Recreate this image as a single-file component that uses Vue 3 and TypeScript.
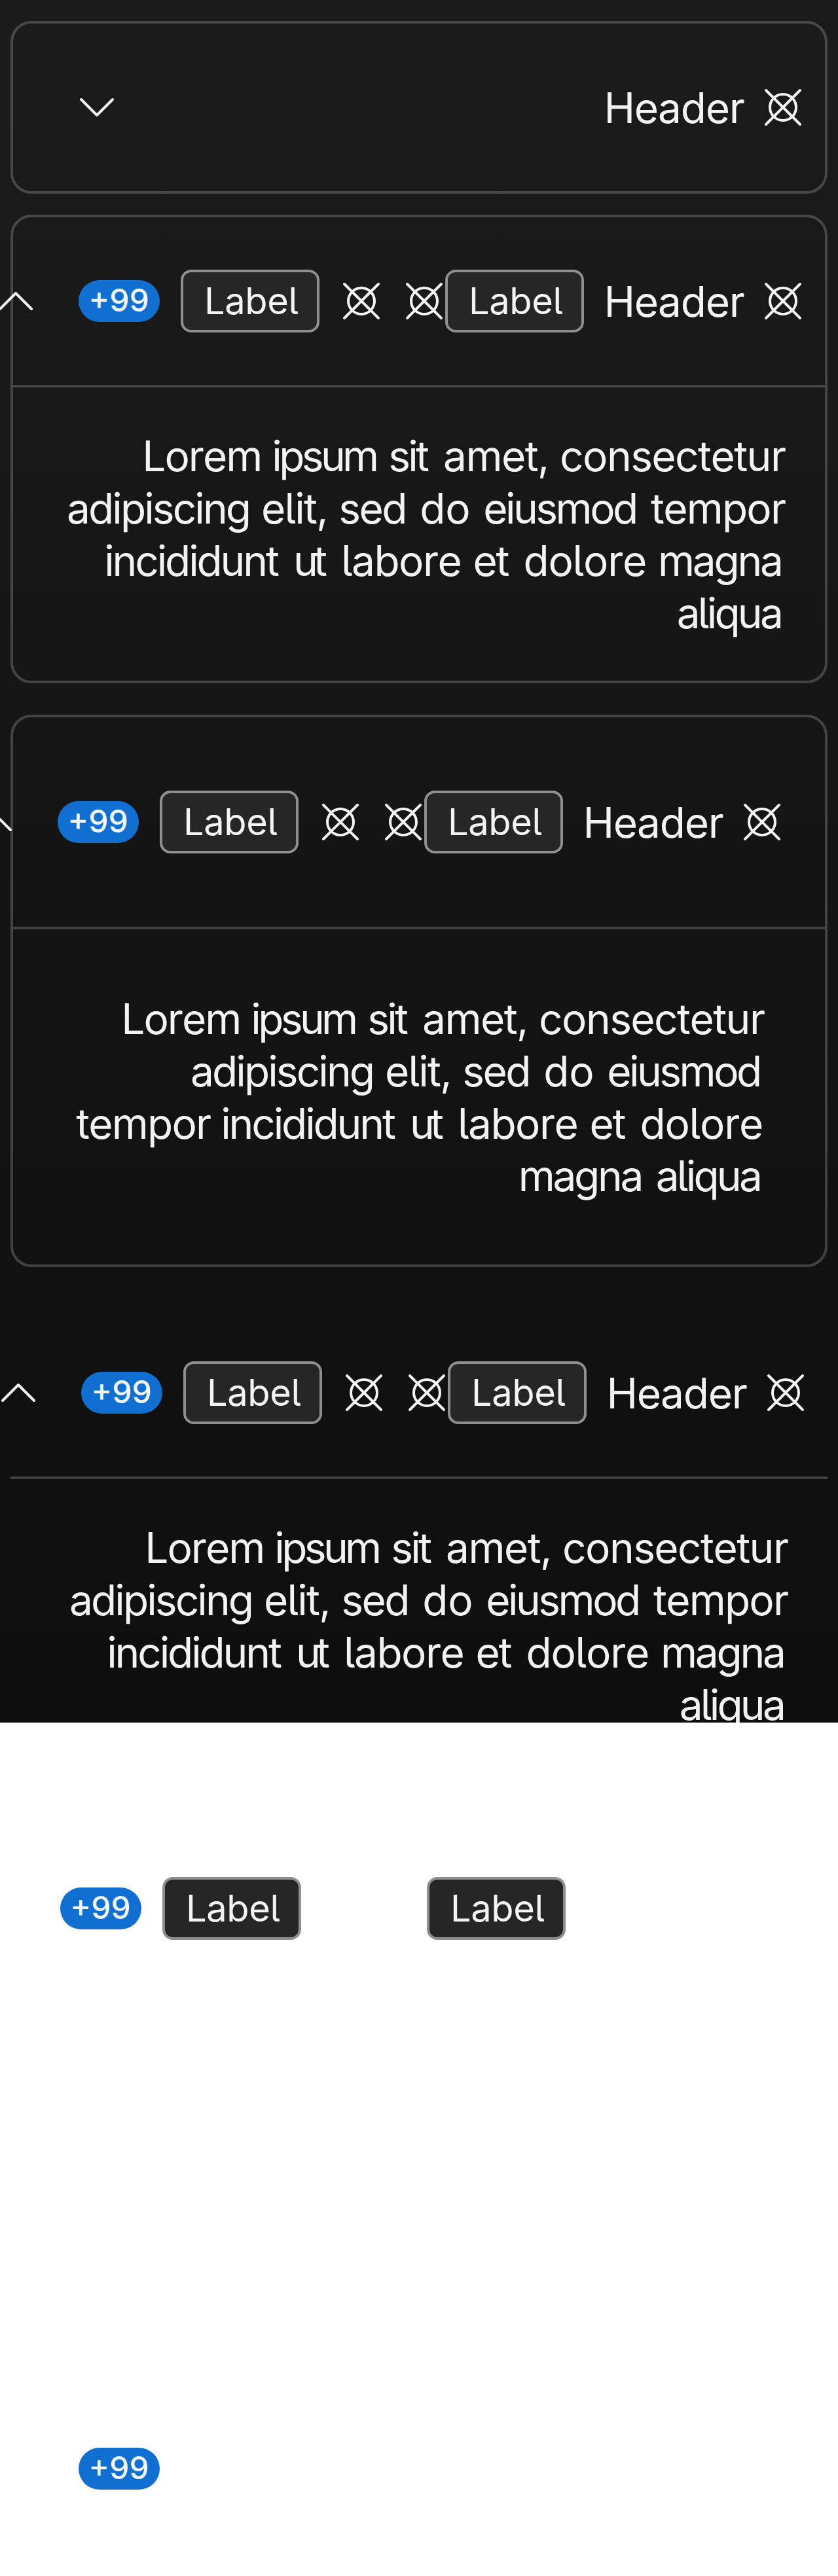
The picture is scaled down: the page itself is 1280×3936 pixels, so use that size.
<script setup lang="ts">
type Item =
  | { kind: 'chevron'; open: boolean }
  | { kind: 'badge' }
  | { kind: 'label' }
  | { kind: 'icon'; flush?: boolean }
  | { kind: 'title' }
  | { kind: 'space'; width: number }

interface Panel {
  bordered: boolean
  roomy: boolean
  faded?: boolean
  gap: number
  items: Item[]
  lines: string[]
}

const glyphs: Record<string, [number, number]> = {
  H: [12, 11.9],
  L: [9, 9.05],
  a: [9, 8.98],
  b: [10, 9.81],
  c: [9, 9.15],
  d: [10, 9.81],
  e: [9, 9.34],
  g: [9, 9.81],
  i: [3, 3.88],
  l: [4, 4.3],
  m: [13, 14.03],
  n: [9, 9.45],
  o: [10, 9.59],
  p: [9, 9.81],
  q: [9, 9.81],
  r: [5, 6],
  s: [8, 8.45],
  t: [6, 5.23],
  u: [8, 9.47],
  ',': [4, 4.61],
}

// Spreads a word so that its first and last letters sit on the whole-pixel
// advances, and trims what the last letter adds behind it.
function tracking(word: string): Record<string, string> {
  const diffs = [...word].map((ch) => {
    const [target, natural] = glyphs[ch] ?? [0.25, 0]
    return target - 0.25 - natural
  })
  const last = diffs.pop() ?? 0
  const spacing = diffs.reduce((sum, d) => sum + d, 0) / Math.max(diffs.length, 1)
  return {
    letterSpacing: spacing.toFixed(3) + 'px',
    marginRight: (last - spacing).toFixed(3) + 'px',
  }
}

const full: Item[] = [
  { kind: 'chevron', open: true },
  { kind: 'badge' },
  { kind: 'label' },
  { kind: 'icon' },
  { kind: 'icon', flush: true },
  { kind: 'label' },
  { kind: 'title' },
  { kind: 'icon' },
]

const narrow = [
  'Lorem ipsum sit amet, consectetur',
  'adipiscing elit, sed do eiusmod tempor',
  'incididunt ut labore et dolore magna',
  'aliqua',
]

const panels: Panel[] = [
  {
    bordered: true,
    roomy: false,
    gap: 8,
    items: [{ kind: 'chevron', open: false }, { kind: 'title' }, { kind: 'icon' }],
    lines: [],
  },
  { bordered: true, roomy: false, gap: 12, items: full, lines: narrow },
  {
    bordered: true,
    roomy: true,
    gap: 16,
    items: full,
    lines: [
      'Lorem ipsum sit amet, consectetur',
      'adipiscing elit, sed do eiusmod',
      'tempor incididunt ut labore et dolore',
      'magna aliqua',
    ],
  },
  { bordered: false, roomy: false, gap: 12, items: full, lines: narrow },
  {
    bordered: false,
    roomy: true,
    faded: true,
    gap: 12,
    items: [
      { kind: 'badge' },
      { kind: 'label' },
      { kind: 'space', width: 32 },
      { kind: 'label' },
      { kind: 'space', width: 76 },
    ],
    lines: [],
  },
  {
    bordered: true,
    roomy: false,
    faded: true,
    gap: 0,
    items: [{ kind: 'badge' }, { kind: 'space', width: 238 }],
    lines: [],
  },
]
</script>

<template>
  <main class="page">
    <section
      v-for="(panel, i) in panels"
      :key="i"
      class="panel"
      :class="{ bordered: panel.bordered, roomy: panel.roomy, faded: panel.faded }"
      :style="{ marginBottom: panel.gap + 'px' }"
    >
      <header class="head">
        <template v-for="(item, j) in panel.items" :key="j">
          <span v-if="item.kind === 'chevron'" class="chevron">
            <svg viewBox="0 0 16 16">
              <path :d="item.open ? 'M2 11 8 5l6 6' : 'M2 5l6 6 6-6'" />
            </svg>
          </span>
          <span v-else-if="item.kind === 'badge'" class="badge">+99</span>
          <span v-else-if="item.kind === 'label'" class="label">Label</span>
          <span v-else-if="item.kind === 'title'" class="title">Header</span>
          <svg v-else-if="item.kind === 'icon'" class="icon" :class="{ flush: item.flush }" viewBox="0 0 16 16">
            <circle cx="8" cy="8" r="5" />
            <path d="M1.5 1.5l13 13M14.5 1.5l-13 13" />
          </svg>
          <span v-else class="space" :style="{ width: item.width + 'px' }"></span>
        </template>
      </header>
      <div v-if="panel.lines.length" class="body">
        <p v-for="line in panel.lines" :key="line">
          <template v-for="(word, k) in line.split(' ')" :key="k">{{ k ? ' ' : '' }}<span :style="tracking(word)">{{ word }}</span></template>
        </p>
      </div>
    </section>
  </main>
</template>

<style>
html,
body {
  margin: 0;
  background: #fff;
}
#app {
  height: 3936px;
  overflow: hidden;
}
</style>

<style scoped>
.page {
  box-sizing: border-box;
  width: 320px;
  height: 984px;
  padding: 8px 4px;
  overflow: hidden;
  transform: scale(4);
  transform-origin: 0 0;
  background: linear-gradient(#1b1b1b, #0e0e0e) 0 0 / 100% 658px no-repeat;
  color: rgba(255, 255, 255, 0.95);
  font-family: Inter, sans-serif;
  font-size: 16px;
  line-height: 20px;
  font-kerning: none;
  font-feature-settings: 'cv05';
}
.panel {
  box-sizing: border-box;
}
.bordered {
  border: 1px solid rgba(255, 255, 255, 0.2);
  border-radius: 8px;
}
.faded.bordered {
  border-color: #fff;
}
.head {
  box-sizing: border-box;
  display: flex;
  align-items: center;
  justify-content: flex-end;
  gap: 8px;
  height: 64px;
  padding: 0 8px 0 24px;
}
.roomy .head {
  height: 80px;
  padding-right: 16px;
}
.head > * {
  flex: none;
}
.body {
  padding: 16px;
  border-top: 1px solid rgba(255, 255, 255, 0.2);
}
.roomy .body {
  padding: 24px;
}
.body p {
  margin: 0 0 0 -8px;
  text-align: right;
  white-space: nowrap;
  word-spacing: 0.25px;
}
.faded.roomy {
  height: 209px;
}
.chevron {
  display: flex;
  width: 24px;
  margin-right: auto;
}
.chevron svg,
.icon {
  display: block;
  width: 16px;
  height: 16px;
  fill: none;
  stroke: #f3f3f3;
  stroke-width: 1;
  stroke-linecap: round;
  stroke-linejoin: round;
}
.flush {
  margin-right: -8px;
}
.title {
  width: 52.4px;
  margin-left: -0.4px;
  letter-spacing: -0.3px;
  white-space: nowrap;
}
.label {
  box-sizing: border-box;
  width: 53px;
  height: 24px;
  padding: 0 8px;
  border: 1px solid #8f8f8f;
  border-radius: 4px;
  background: #262626;
  font-size: 14px;
  line-height: 22px;
  letter-spacing: -0.1px;
  white-space: nowrap;
}
.badge {
  box-sizing: border-box;
  width: 31px;
  height: 16px;
  padding: 0 4px 0 3.8px;
  border-radius: 8px;
  background: #116fd1;
  font-size: 12px;
  font-weight: 500;
  line-height: 16px;
  white-space: nowrap;
}
</style>
